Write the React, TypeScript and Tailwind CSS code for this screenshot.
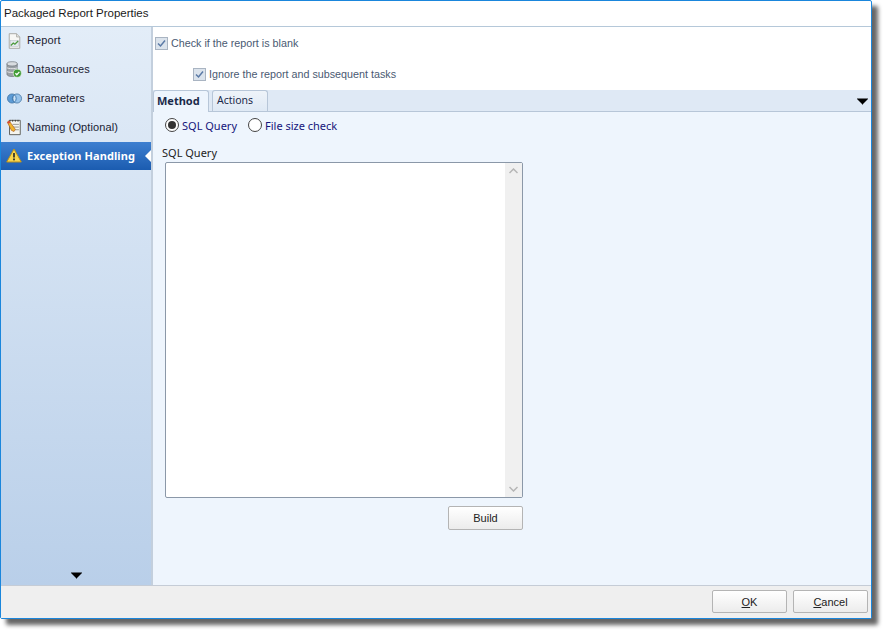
import { ReactNode } from "react";

const font = "font-['Noto_Sans','Liberation_Sans',sans-serif]";
const thin = "font-['Liberation_Sans',Arial,sans-serif]";

const ReportIcon = () => (
  <svg width="13" height="16" viewBox="0 0 16 19">
    <path d="M1.500 .5h9l4 4v14h-13z" fill="#f7f7f5" stroke="#a9a9a5" strokeWidth="1.200" />
    <path d="M10.500 .5v4h4" fill="#e4e4e0" stroke="#a9a9a5" />
    <rect x="3" y="9" width="10" height="7" fill="#e3e9ee" stroke="#b4bcc4" strokeWidth=".6" />
    <path d="M3.500 15l3-3 2 1.500 4-4" fill="none" stroke="#4c9a3c" strokeWidth="1.500" />
  </svg>
);

const DatabaseIcon = () => (
  <svg width="16" height="17" viewBox="0 0 17 18">
    <path d="M1 3v11c0 1.500 2.500 2.500 5.500 2.500S12 15.500 12 14V3z" fill="#9aa0a6" stroke="#6d7278" strokeWidth=".7" />
    <ellipse cx="6.500" cy="3" rx="5.500" ry="2.300" fill="#d8dce0" stroke="#6d7278" strokeWidth=".7" />
    <path d="M1 7c1 1.500 10 1.500 11 0M1 11c1 1.500 10 1.500 11 0" fill="none" stroke="#e6e8ea" />
    <circle cx="12" cy="13" r="4.300" fill="#3f9c35" stroke="#e9f3e6" strokeWidth=".7" />
    <path d="M10 13l1.500 1.600L14.200 11.500" fill="none" stroke="#fff" strokeWidth="1.300" />
  </svg>
);

const ParametersIcon = () => (
  <svg width="17" height="11" viewBox="0 0 17 12">
    <ellipse cx="5.800" cy="6" rx="5" ry="5" fill="#5c9bd6" stroke="#3d6f9f" strokeWidth=".8" />
    <ellipse cx="11.200" cy="6" rx="5" ry="5" fill="#7db4e6" fillOpacity=".75" stroke="#3d6f9f" strokeWidth=".8" />
    <path d="M8.500 2.300a5 5 0 0 1 0 7.400a5 5 0 0 1 0-7.400z" fill="#cfe4f7" stroke="#3d6f9f" strokeWidth=".6" />
  </svg>
);

const NamingIcon = () => (
  <svg width="16" height="17" viewBox="0 0 17 19">
    <path d="M3.500 1.500h12v16h-12z" fill="#f5f5ef" stroke="#55554f" />
    <path d="M4 1v2M7 1v2M10 1v2M13 1v2" stroke="#33332f" />
    <path d="M7 6h7M7 9h7M8 12h6" stroke="#8f8f88" />
    <path d="M1 3.500l2-1.500 7 9.500-1.500 2.500-2.800-1.200z" fill="#f0b52c" stroke="#a8561e" strokeWidth=".7" />
    <path d="M1 3.500l2-1.500 1.400 1.900-2 1.500z" fill="#d9473c" />
  </svg>
);

const WarningIcon = () => (
  <svg width="16" height="15" viewBox="0 0 16 15">
    <path d="M8 1L15.300 14H.7z" fill="#f8d64e" stroke="#b98f1b" strokeLinejoin="round" />
    <path d="M8 5v4.500" stroke="#2b2b2b" strokeWidth="1.700" />
    <rect x="7.100" y="10.500" width="1.800" height="1.800" fill="#2b2b2b" />
  </svg>
);

const Caret = () => (
  <svg width="11" height="7" viewBox="0 0 11 7">
    <path d="M0 .5h11v1H10v1H9v1H8v1H7v1H6v1H5v-1H4v-1H3v-1H2v-1H1v-1H0z" fill="#000" />
  </svg>
);

const NavItem = ({ icon, label, active }: { icon: ReactNode; label: string; active?: boolean }) => (
  <div
    className={`relative flex items-center ${
      active
        ? "h-[28px] bg-gradient-to-b from-[#3d7fd0] to-[#1b5cb0] pb-[1px] font-bold text-white"
        : `h-[29px] text-[#1a2233] ${thin}`
    }`}
  >
    <div className="flex w-[26px] shrink-0 items-center justify-center">{icon}</div>
    <span className="text-[11px] leading-none tracking-[0.1px]">{label}</span>
    {active && (
      <div className="absolute right-0 top-[8px] h-0 w-0 border-y-[6px] border-r-[6px] border-y-transparent border-r-white" />
    )}
  </div>
);

const Check = ({ label }: { label: string }) => (
  <div className="flex items-center gap-[3px]">
    <div className="flex h-[13px] w-[13px] items-center justify-center border border-[#a9b4c2] bg-[#dbe3ec]">
      <svg width="9" height="9" viewBox="0 0 9 9">
        <path d="M1 4.500l2.500 2.500L8 1.500" fill="none" stroke="#5b7aa6" strokeWidth="1.500" />
      </svg>
    </div>
    <span className={`text-[10.750px] leading-none text-[#4a5a72] ${thin}`}>{label}</span>
  </div>
);

const Radio = ({ label, checked }: { label: string; checked?: boolean }) => (
  <div className="flex items-center gap-[3px]">
    <div className="flex h-[14px] w-[14px] items-center justify-center rounded-full border border-[#444] bg-white">
      {checked && <div className="h-[8px] w-[8px] rounded-full bg-[#333]" />}
    </div>
    <span className="text-[11px] leading-none text-[#14147a]">{label}</span>
  </div>
);

const GreyButton = ({ className, children }: { className: string; children: ReactNode }) => (
  <button
    className={`flex items-center justify-center rounded-[2px] border border-[#b4b4b4] bg-gradient-to-b from-white to-[#ececec] text-[11px] text-[#222] ${thin} ${className}`}
  >
    {children}
  </button>
);

const App = () => {
  return (
    <div className={`h-[634px] w-[887px] overflow-hidden bg-white ${font}`}>
      <div className="flex h-[619px] w-[872px] flex-col rounded-[2px] border border-[#1a86dc] bg-white shadow-[6px_6px_4px_rgba(0,0,0,0.6)]">
        <div className={`flex h-[26px] shrink-0 items-center border-b border-[#b5c8d9] pl-[3px] text-[11.500px] text-[#1a1a1a] ${thin}`}>
          Packaged Report Properties
        </div>

        <div className="flex min-h-0 flex-1">
          {/* left nav */}
          <div className="flex w-[152px] shrink-0 flex-col border-r-2 border-[#c3cfdd] bg-gradient-to-b from-[#e3edf8] to-[#b9cfe9]">
            <div className="-mt-[1px] flex flex-col">
              <NavItem icon={<ReportIcon />} label="Report" />
              <NavItem icon={<DatabaseIcon />} label="Datasources" />
              <NavItem icon={<ParametersIcon />} label="Parameters" />
              <NavItem icon={<NamingIcon />} label="Naming (Optional)" />
              <NavItem icon={<WarningIcon />} label="Exception Handling" active />
            </div>
            <div className="mt-auto flex justify-center pb-[6px]">
              <Caret />
            </div>
          </div>

          {/* main panel */}
          <div className="flex min-w-0 flex-1 flex-col">
            <div className="h-[63px] shrink-0 bg-white">
              <div className="pl-[2px] pt-[10px]">
                <Check label="Check if the report is blank" />
              </div>
              <div className="pl-[40px] pt-[18px]">
                <Check label="Ignore the report and subsequent tasks" />
              </div>
            </div>

            {/* tab strip */}
            <div className="flex h-[22px] shrink-0 items-end border-b border-[#b7c6d8] bg-[#dfe9f5]">
              <div className="relative top-[1px] flex h-[22px] w-[56px] items-center rounded-t-[3px] border border-b-0 border-[#b7c6d8] bg-[#eef5fd] pl-[3px] text-[11px] font-bold text-[#1b2a4a]">
                Method
              </div>
              <div className="ml-[3px] flex h-[21px] w-[56px] items-center rounded-t-[3px] border border-b-0 border-[#b7c6d8] bg-gradient-to-b from-[#eef3f9] to-[#dfe9f5] pl-[4px] text-[10.500px] text-[#1b2a4a]">
                Actions
              </div>
              <div className="ml-auto self-center pr-[3px] pt-[1px]">
                <Caret />
              </div>
            </div>

            <div className="flex-1 bg-[#eef5fd] pl-[12px]">
              <div className="flex gap-[11px] pt-[6px]">
                <Radio label="SQL Query" checked />
                <Radio label="File size check" />
              </div>
              <div className="ml-[-3px] pt-[14px] text-[11px] leading-[14px] text-[#222]">SQL Query</div>
              <div className="mt-[2px] flex h-[336px] w-[358px] justify-end rounded-[2px] border border-[#8b98a8] bg-white">
                <div className="flex w-[17px] flex-col items-center justify-between bg-[#f0f0f0] py-[5px]">
                  <svg width="9" height="6" viewBox="0 0 9 6">
                    <path d="M.5 5L4.500 1l4 4" fill="none" stroke="#b5b5b5" strokeWidth="1.500" />
                  </svg>
                  <svg width="9" height="6" viewBox="0 0 9 6">
                    <path d="M.5 1l4 4 4-4" fill="none" stroke="#b5b5b5" strokeWidth="1.500" />
                  </svg>
                </div>
              </div>
              <div className="flex w-[358px] justify-end pt-[8px]">
                <GreyButton className="h-[24px] w-[75px]">Build</GreyButton>
              </div>
            </div>
          </div>
        </div>

        {/* footer */}
        <div className="flex h-[33px] shrink-0 items-center justify-end gap-[6px] border-t border-[#c5ccd6] bg-[#efefef] pb-[2px] pr-[3px]">
          <GreyButton className="h-[23px] w-[75px] pt-[2px]">
            <span className="underline">O</span>K
          </GreyButton>
          <GreyButton className="h-[23px] w-[75px] pt-[2px]">
            <span className="underline">C</span>ancel
          </GreyButton>
        </div>
      </div>
    </div>
  );
};

export default App;
